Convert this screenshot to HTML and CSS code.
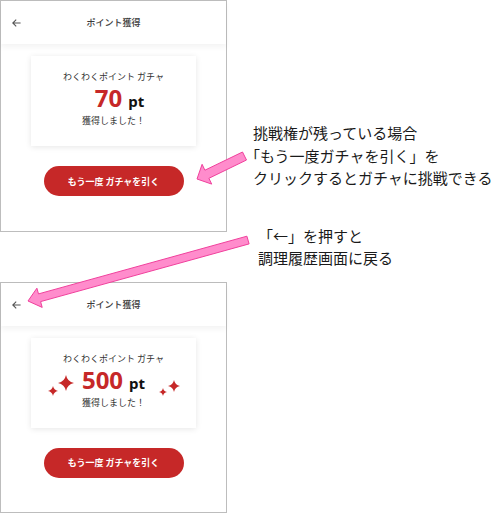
FILE: index.html
```html
<!DOCTYPE html>
<html lang="ja">
<head>
<meta charset="utf-8">
<title>ポイント獲得</title>
<link rel="stylesheet" href="styles.css">
</head>
<body>
<div class="page">
  <div class="screens">
    <section class="phone">
      <header class="bar">
        <svg class="back" viewBox="0 0 9 8" aria-label="戻る"><path d="M8.6 4H0.8M4.2 0.6L0.8 4l3.4 3.4"/></svg>
        <h1 class="title">ポイント獲得</h1>
        <span></span>
      </header>
      <div class="content">
        <div class="card">
          <p class="label">わくわくポイント ガチャ</p>
          <p class="points points-short"><span class="num">70</span><span class="unit">pt</span></p>
          <p class="got">獲得しました！</p>
        </div>
        <button class="retry" type="button">もう一度 ガチャを引く</button>
      </div>
    </section>

    <section class="phone">
      <header class="bar">
        <svg class="back" viewBox="0 0 9 8" aria-label="戻る"><path d="M8.6 4H0.8M4.2 0.6L0.8 4l3.4 3.4"/></svg>
        <h1 class="title">ポイント獲得</h1>
        <span></span>
      </header>
      <div class="content">
        <div class="card">
          <p class="label">わくわくポイント ガチャ</p>
          <p class="points"><span class="num">500</span><span class="unit">pt</span></p>
          <p class="got">獲得しました！</p>
          <svg class="spark spark-a" viewBox="0 0 24 24"><path d="M12 0Q14 10 24 12Q14 14 12 24Q10 14 0 12Q10 10 12 0Z"/></svg>
          <svg class="spark spark-b" viewBox="0 0 24 24"><path d="M12 0Q14 10 24 12Q14 14 12 24Q10 14 0 12Q10 10 12 0Z"/></svg>
          <svg class="spark spark-c" viewBox="0 0 24 24"><path d="M12 0Q14 10 24 12Q14 14 12 24Q10 14 0 12Q10 10 12 0Z"/></svg>
          <svg class="spark spark-d" viewBox="0 0 24 24"><path d="M12 0Q14 10 24 12Q14 14 12 24Q10 14 0 12Q10 10 12 0Z"/></svg>
        </div>
        <button class="retry" type="button">もう一度 ガチャを引く</button>
      </div>
    </section>
  </div>

  <div class="notes">
    <p class="note note-retry">
      <span class="line">挑戦権が残っている場合</span>
      <span class="line line-hang">「もう一度ガチャを引く」を</span>
      <span class="line">クリックするとガチャに挑戦できる</span>
    </p>
    <p class="note note-back">
      <span class="line">「←」を押すと</span>
      <span class="line">調理履歴画面に戻る</span>
    </p>
  </div>

  <svg class="callouts" viewBox="0 0 500 513" aria-hidden="true">
    <polygon points="246.5,160 208.9,178.3 211.7,184.1 197,179 202.1,164.3 204.9,170.2 242.5,152"/>
    <polygon points="249.1,243.9 40.6,301.6 42.2,307.4 28,301 36.9,288.2 38.5,293.9 246.9,236.2"/>
  </svg>
</div>
</body>
</html>
```

FILE: styles.css
```css
* { box-sizing: border-box; }

body {
  margin: 0;
  background: #fff;
  font-family: "Noto Sans CJK JP", "Noto Sans", sans-serif;
}

.page {
  position: relative;
  width: 500px;
  height: 513px;
  display: flex;
  overflow: hidden;
}

.screens {
  flex: none;
  width: 227px;
  display: flex;
  flex-direction: column;
  gap: 50px;
}

.phone {
  height: 232px;
  border: 1px solid #bdbdbd;
  background: #fff;
  display: flex;
  flex-direction: column;
}

.bar {
  height: 43px;
  flex: none;
  display: grid;
  grid-template-columns: 40px 1fr 40px;
  align-items: center;
  background: #fff;
  box-shadow: 0 3px 6px rgba(0, 0, 0, 0.05);
  position: relative;
  z-index: 1;
}

.back {
  width: 9px;
  height: 8px;
  margin-left: 11px;
  margin-top: 1px;
  fill: none;
  stroke: #555;
  stroke-width: 1.1;
}

.title {
  margin: 0;
  text-align: center;
  font-size: 9px;
  font-weight: 500;
  color: #3a3a3a;
}

.content {
  display: flex;
  flex-direction: column;
  align-items: center;
  padding-top: 12px;
}

.card {
  position: relative;
  width: 165px;
  height: 90px;
  background: #fff;
  box-shadow: 0 1px 6px rgba(0, 0, 0, 0.1);
  display: flex;
  flex-direction: column;
  align-items: center;
  padding-top: 14px;
}

.label,
.got {
  margin: 0;
  font-size: 9px;
  line-height: 13px;
  color: #333;
}

.points {
  margin: 0;
  height: 30px;
  line-height: 30px;
  display: flex;
  align-items: baseline;
  gap: 6px;
}

.points-short {
  margin-left: 12px;
}

.num {
  font-family: "Noto Sans", sans-serif;
  font-weight: 700;
  font-size: 24px;
  color: #c62828;
}

.unit {
  font-family: "Noto Sans", sans-serif;
  font-weight: 700;
  font-size: 15px;
  color: #111;
}

.got {
  margin-top: 1px;
}

.retry {
  margin-top: 20px;
  width: 140px;
  height: 30px;
  border: 0;
  border-radius: 15px;
  background: #c62828;
  color: #fff;
  font-family: "Noto Sans CJK JP", sans-serif;
  font-weight: 700;
  font-size: 9px;
  padding: 0;
}

.spark {
  position: absolute;
  fill: #c62828;
}

.spark-a { left: 27px; top: 37.5px; width: 16px; height: 16px; }
.spark-b { left: 17px; top: 48.5px; width: 10px; height: 10px; }
.spark-c { left: 136.5px; top: 42.5px; width: 12px; height: 12px; }
.spark-d { left: 128px; top: 50.5px; width: 8px; height: 8px; }

.notes {
  padding-left: 26px;
  padding-top: 122px;
  display: flex;
  flex-direction: column;
  gap: 35px;
}

.note {
  margin: 0;
  font-size: 15px;
  line-height: 22.5px;
  color: #1a1a1a;
  white-space: nowrap;
}

.line {
  display: block;
}

.line-hang {
  margin-left: -8px;
}

.note-back {
  margin-left: 5px;
}

.callouts {
  position: absolute;
  left: 0;
  top: 0;
  z-index: 2;
  width: 500px;
  height: 513px;
  pointer-events: none;
  fill: #ff8ccc;
  stroke: #f0409c;
  stroke-width: 1;
}
```
